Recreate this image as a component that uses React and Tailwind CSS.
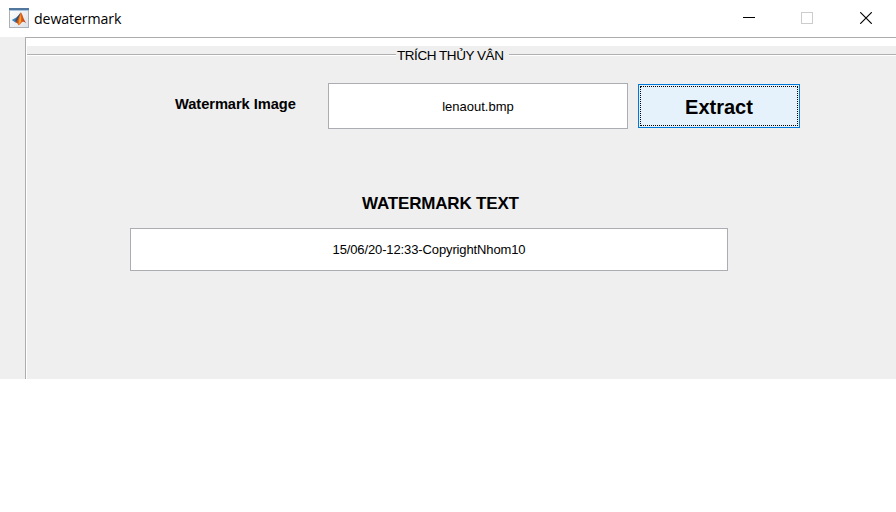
function MatlabIcon() {
  return (
    <svg width="20" height="20" viewBox="0 0 20 20" className="shrink-0">
      <defs>
        <linearGradient id="face" x1="0" y1="0" x2="1" y2="1">
          <stop offset="0" stopColor="#ffffff" />
          <stop offset="1" stopColor="#dde2e8" />
        </linearGradient>
        <linearGradient id="peak" x1="0" y1="0" x2="1" y2="0">
          <stop offset="0" stopColor="#8c2c1c" />
          <stop offset="0.4" stopColor="#ee7c20" />
          <stop offset="0.6" stopColor="#dc5a1a" />
          <stop offset="1" stopColor="#a8341c" />
        </linearGradient>
      </defs>
      <rect x="0.5" y="0.5" width="19" height="19" fill="url(#face)" stroke="#a9b0b8" />
      <rect x="0" y="0" width="20" height="2" fill="#52779f" />
      <rect x="1" y="2" width="18" height="1" fill="#a9c4df" />
      <path d="M2.8 12 L7.2 9.6 L9.4 7.6 L11.7 4.4 L9.6 12.5 L6.4 14.6 Z" fill="#3b82ba" />
      <path d="M8.4 9 L11.9 4.2 L10.4 10.6 L7.6 13.8 L6 12.6 Z" fill="#46495f" />
      <path d="M6.4 14.4 C8.6 13 10.2 8.4 11.9 4.2 C13.6 6 14.6 11.8 17.2 15.2 C14.8 13.6 13.4 13.2 12.4 14.8 C11.4 16.2 10.4 17 9.4 17.2 C9 15.6 8 14.4 6.4 14.4 Z" fill="url(#peak)" />
      <path d="M9.4 16.8 L10.8 10 L12 6.6 L12 13.6 Z" fill="#f5a32c" />
    </svg>
  );
}

function TitleBar() {
  return (
    <header className="flex h-[37px] items-start bg-white">
      <div className="flex pt-2 pl-[9px]">
        <MatlabIcon />
        <span className="ml-[5px] w-[100px] font-['Open_Sans','Noto_Sans',sans-serif] text-[14.2px] leading-[21px] tracking-[-0.12px] whitespace-nowrap">
          dewatermark
        </span>
      </div>
      <div className="ml-auto flex pt-3 pr-6">
        <svg width="12" height="12" shapeRendering="crispEdges">
          <rect x="0" y="5" width="12" height="1" fill="#000" />
        </svg>
        <svg width="12" height="12" className="ml-[46px]" shapeRendering="crispEdges">
          <rect x="0.5" y="0.5" width="11" height="11" fill="none" stroke="#ccc" />
        </svg>
        <svg width="12" height="12" className="ml-[47px]">
          <path d="M0.2 0.2 L11.8 11.8 M11.8 0.2 L0.2 11.8" stroke="#000" strokeWidth="1.15" />
        </svg>
      </div>
    </header>
  );
}

function PanelLine({ className }) {
  return <div className={`mt-2 h-[2px] border-t border-[#b0b0b0] bg-white ${className}`} />;
}

export default function App() {
  return (
    <div className="h-[512px] w-[896px] overflow-hidden bg-white font-['Liberation_Sans',Arial,sans-serif] text-black">
      <TitleBar />
      <div className="flex h-[342px] bg-[#efefef]">
        <div className="w-[25px] shrink-0" />
        <main className="flex-1 border-t border-l border-[#acacac]">
          <div className="h-full border-l border-white">
            <div className="h-2 bg-white" />
            <div className="flex h-[37px]">
              <PanelLine className="w-[369px]" />
              <h1 className="w-[113px] pl-px text-[13.5px] leading-[19px] tracking-[-0.45px] whitespace-nowrap">
                TRÍCH THỦY VÂN
              </h1>
              <PanelLine className="flex-1" />
            </div>
            <div className="flex h-[46px] pl-[148px]">
              <label className="w-[153px] text-[14.67px] leading-[42px] font-bold tracking-[-0.06px] whitespace-nowrap">
                Watermark Image
              </label>
              <div className="flex w-[300px] items-center justify-center border border-[#abadb3] bg-white pt-[2px] text-[13px] whitespace-nowrap">
                lenaout.bmp
              </div>
              <button className="mt-px ml-[10px] h-11 w-[162px] border border-[#0078d7] bg-[#e5f1fb] p-px text-[20px] font-bold">
                <span className="flex h-full items-center justify-center border border-dotted border-black pt-[2px]">
                  Extract
                </span>
              </button>
            </div>
            <h2 className="mt-[64px] ml-[335px] h-[35px] text-[17px] leading-[21px] font-bold tracking-[-0.18px] whitespace-nowrap">
              WATERMARK TEXT
            </h2>
            <div className="ml-[103px] flex h-[43px] w-[598px] items-center justify-center border border-[#abadb3] bg-white text-[13px] tracking-[-0.12px] whitespace-nowrap">
              15/06/20-12:33-CopyrightNhom10
            </div>
          </div>
        </main>
      </div>
    </div>
  );
}
